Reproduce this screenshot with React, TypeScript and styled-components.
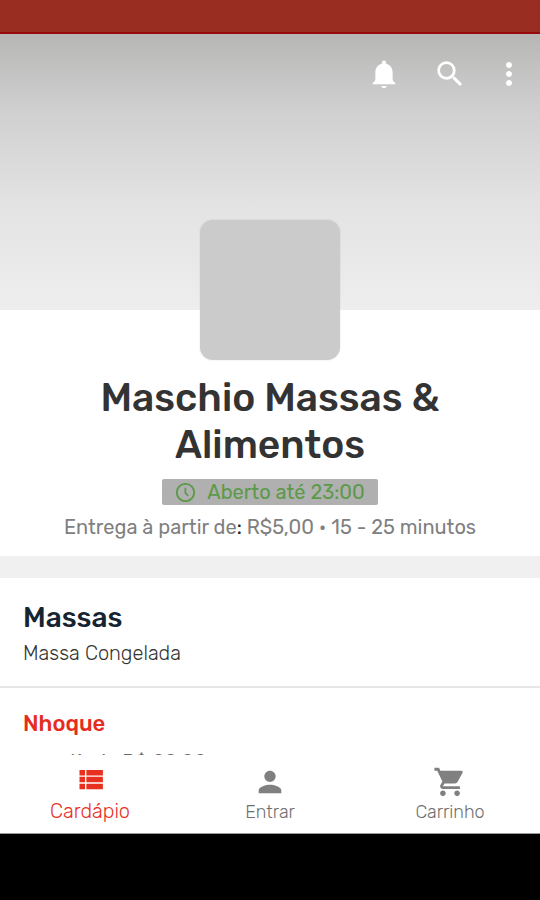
import React from "react";
import styled, { createGlobalStyle } from "styled-components";

const GlobalStyle = createGlobalStyle`
  *, *::before, *::after { box-sizing: border-box; }
  body {
    margin: 0;
    background: #000;
    font-family: Rubik, Roboto, "Liberation Sans", sans-serif;
    font-weight: 300;
    color: #333;
  }
  h1, h2, h3, p { margin: 0; }
  button {
    padding: 0;
    border: 0;
    background: none;
    font: inherit;
    color: inherit;
    cursor: pointer;
  }
`;

const Screen = styled.div`
  display: flex;
  flex-direction: column;
  height: 100vh;
`;

const StatusBar = styled.div`
  flex: none;
  height: 34px;
  background: #9a2d22;
  border-bottom: 2px solid #960a0e;
`;

const Content = styled.main`
  flex: 1;
  min-height: 0;
  overflow: hidden;
  background: #fff;
`;

const Cover = styled.header`
  display: flex;
  justify-content: flex-end;
  align-items: center;
  align-content: flex-start;
  flex-wrap: wrap;
  gap: 30px;
  height: 276px;
  padding: 22px 13px 0;
  background: linear-gradient(#b6b7b5, #d0d0d0 28%, #e3e3e3 62%, #eee);
  color: #fff;
`;

const IconButton = styled.button<{ $narrow?: boolean }>`
  display: flex;
  justify-content: center;
  width: 36px;
  margin-left: ${(p) => (p.$narrow ? -7 : 0)}px;
`;

const Icon = styled.svg<{ $size: number }>`
  display: block;
  width: ${(p) => p.$size}px;
  height: ${(p) => p.$size}px;
  fill: currentColor;
`;

const Store = styled.section`
  display: flex;
  flex-direction: column;
  align-items: center;
  padding: 0 24px 16px;
  text-align: center;
`;

const Logo = styled.div`
  width: 140px;
  height: 140px;
  margin-top: -90px;
  border-radius: 13px;
  background: #cbcbcb;
  box-shadow: 0 0 2px rgba(0, 0, 0, 0.12);
`;

const StoreName = styled.h1`
  max-width: 400px;
  margin-top: 15px;
  font-size: 39px;
  line-height: 47px;
  font-weight: 500;
`;

const OpenBadge = styled.p`
  display: flex;
  align-items: center;
  gap: 10px;
  height: 26px;
  margin-top: 10px;
  padding: 0 13px 0 12px;
  border-radius: 2px;
  background: #b0b0b0;
  color: #5a9a48;
  font-size: 20px;
  font-weight: 400;
`;

const Delivery = styled.p`
  margin-top: 9px;
  font-size: 20px;
  line-height: 26px;
  font-weight: 400;
  color: #808080;
`;

const Colon = styled.span`
  color: #222;
`;

const Category = styled.section`
  padding: 24px 23px 20px;
  border-top: 22px solid #f0f0f0;
  border-bottom: 2px solid #e6e6e6;
`;

const CategoryName = styled.h2`
  font-size: 28px;
  line-height: 32px;
  font-weight: 500;
  color: #142430;
`;

const CategoryNote = styled.p`
  margin-top: 6px;
  font-size: 20px;
  line-height: 26px;
  color: #333;
`;

const Product = styled.article`
  padding: 22px 23px;
`;

const ProductName = styled.h3`
  font-size: 22px;
  line-height: 28px;
  font-weight: 500;
  color: #e52d1e;
`;

const ProductPrice = styled.p`
  margin-top: 11px;
  font-size: 20px;
  line-height: 26px;
  font-weight: 400;
  color: #666;
`;

const TabBar = styled.nav`
  flex: none;
  display: grid;
  grid-template-columns: repeat(3, 1fr);
  height: 79px;
  background: #fff;
  border-bottom: 1px solid #999;
`;

const Tab = styled.button<{ $active?: boolean }>`
  display: flex;
  flex-direction: column;
  align-items: center;
  gap: ${(p) => (p.$active ? 3 : 1)}px;
  padding-top: ${(p) => (p.$active ? 8 : 10)}px;
  font-size: ${(p) => (p.$active ? 20 : 18)}px;
  line-height: 24px;
  color: ${(p) => (p.$active ? "#e8301e" : "#808080")};
`;

const TabLabel = styled.span<{ $active?: boolean }>`
  color: ${(p) => (p.$active ? "#e8301e" : "#707070")};
`;

const SystemBar = styled.div`
  flex: none;
  height: 66px;
  background: #000;
`;

const paths = {
  bell: "M12 22c1.1 0 1.8-.7 1.8-1.6h-3.6c0 .9.7 1.6 1.8 1.6zM18.1 16v-5.2c0-3-1.7-5.4-4.6-6.1V4c0-.8-.6-1.5-1.5-1.5s-1.5.7-1.5 1.5v.7c-2.9.7-4.6 3.1-4.6 6.1V16c-.3 1-1 1.7-1.9 2.2v1h16v-1c-.9-.5-1.6-1.2-1.9-2.2z",
  search:
    "M15.5 14h-.79l-.28-.27A6.47 6.47 0 0 0 16 9.5 6.5 6.5 0 1 0 9.5 16c1.61 0 3.09-.59 4.23-1.57l.27.28v.79l5 4.99L20.49 19l-4.99-5zm-6 0C7.01 14 5 11.99 5 9.5S7.01 5 9.5 5 14 7.01 14 9.5 11.99 14 9.5 14z",
  more: "M12 8c1.1 0 2-.9 2-2s-.9-2-2-2-2 .9-2 2 .9 2 2 2zm0 2c-1.1 0-2 .9-2 2s.9 2 2 2 2-.9 2-2-.9-2-2-2zm0 6c-1.1 0-2 .9-2 2s.9 2 2 2 2-.9 2-2-.9-2-2-2z",
  clock:
    "M11.99 2C6.47 2 2 6.48 2 12s4.47 10 9.99 10C17.52 22 22 17.52 22 12S17.52 2 11.99 2zM12 20c-4.42 0-8-3.58-8-8s3.58-8 8-8 8 3.58 8 8-3.58 8-8 8zm.8-13H11v6l3.4 3.2 1.1-1.3-2.7-2.6z",
  list: "M4 14h4v-4H4v4zm0 5h4v-4H4v4zM4 9h4V5H4v4zm5 5h12v-4H9v4zm0 5h12v-4H9v4zM9 5v4h12V5H9z",
  person:
    "M12 12c2.21 0 4-1.79 4-4s-1.79-4-4-4-4 1.79-4 4 1.79 4 4 4zm0 2c-2.67 0-8 1.34-8 4v2h16v-2c0-2.66-5.33-4-8-4z",
  cart: "M7 18c-1.1 0-1.99.9-1.99 2S5.9 22 7 22s2-.9 2-2-.9-2-2-2zM1 2v2h2l3.6 7.59-1.35 2.45c-.16.28-.25.61-.25.96 0 1.1.9 2 2 2h12v-2H7.42c-.14 0-.25-.11-.25-.25l.03-.12.9-1.63h7.45c.75 0 1.41-.41 1.75-1.03l3.58-6.49A1 1 0 0 0 20 4H5.21l-.94-2H1zm16 16c-1.1 0-1.99.9-1.99 2s.89 2 1.99 2 2-.9 2-2-.9-2-2-2z",
};

function Glyph({ name, size }: { name: keyof typeof paths; size: number }) {
  return (
    <Icon $size={size} viewBox="0 0 24 24" aria-hidden="true">
      <path d={paths[name]} />
    </Icon>
  );
}

export default function App() {
  return (
    <>
      <GlobalStyle />
      <Screen>
        <StatusBar />
        <Content>
          <Cover>
            <IconButton aria-label="Notificações">
              <Glyph name="bell" size={34} />
            </IconButton>
            <IconButton aria-label="Buscar">
              <Glyph name="search" size={34} />
            </IconButton>
            <IconButton aria-label="Mais opções" $narrow>
              <Glyph name="more" size={36} />
            </IconButton>
          </Cover>
          <Store>
            <Logo />
            <StoreName>Maschio Massas &amp; Alimentos</StoreName>
            <OpenBadge>
              <Glyph name="clock" size={23} />
              Aberto até 23:00
            </OpenBadge>
            <Delivery>
              Entrega à partir de<Colon>:</Colon> R$5,00 • 15 - 25 minutos
            </Delivery>
          </Store>
          <Category>
            <CategoryName>Massas</CategoryName>
            <CategoryNote>Massa Congelada</CategoryNote>
          </Category>
          <Product>
            <ProductName>Nhoque</ProductName>
            <ProductPrice>a partir de R$ 20,00</ProductPrice>
          </Product>
        </Content>
        <TabBar>
          <Tab $active aria-current="page">
            <Glyph name="list" size={33} />
            <TabLabel $active>Cardápio</TabLabel>
          </Tab>
          <Tab>
            <Glyph name="person" size={34} />
            <TabLabel>Entrar</TabLabel>
          </Tab>
          <Tab>
            <Glyph name="cart" size={34} />
            <TabLabel>Carrinho</TabLabel>
          </Tab>
        </TabBar>
        <SystemBar />
      </Screen>
    </>
  );
}
